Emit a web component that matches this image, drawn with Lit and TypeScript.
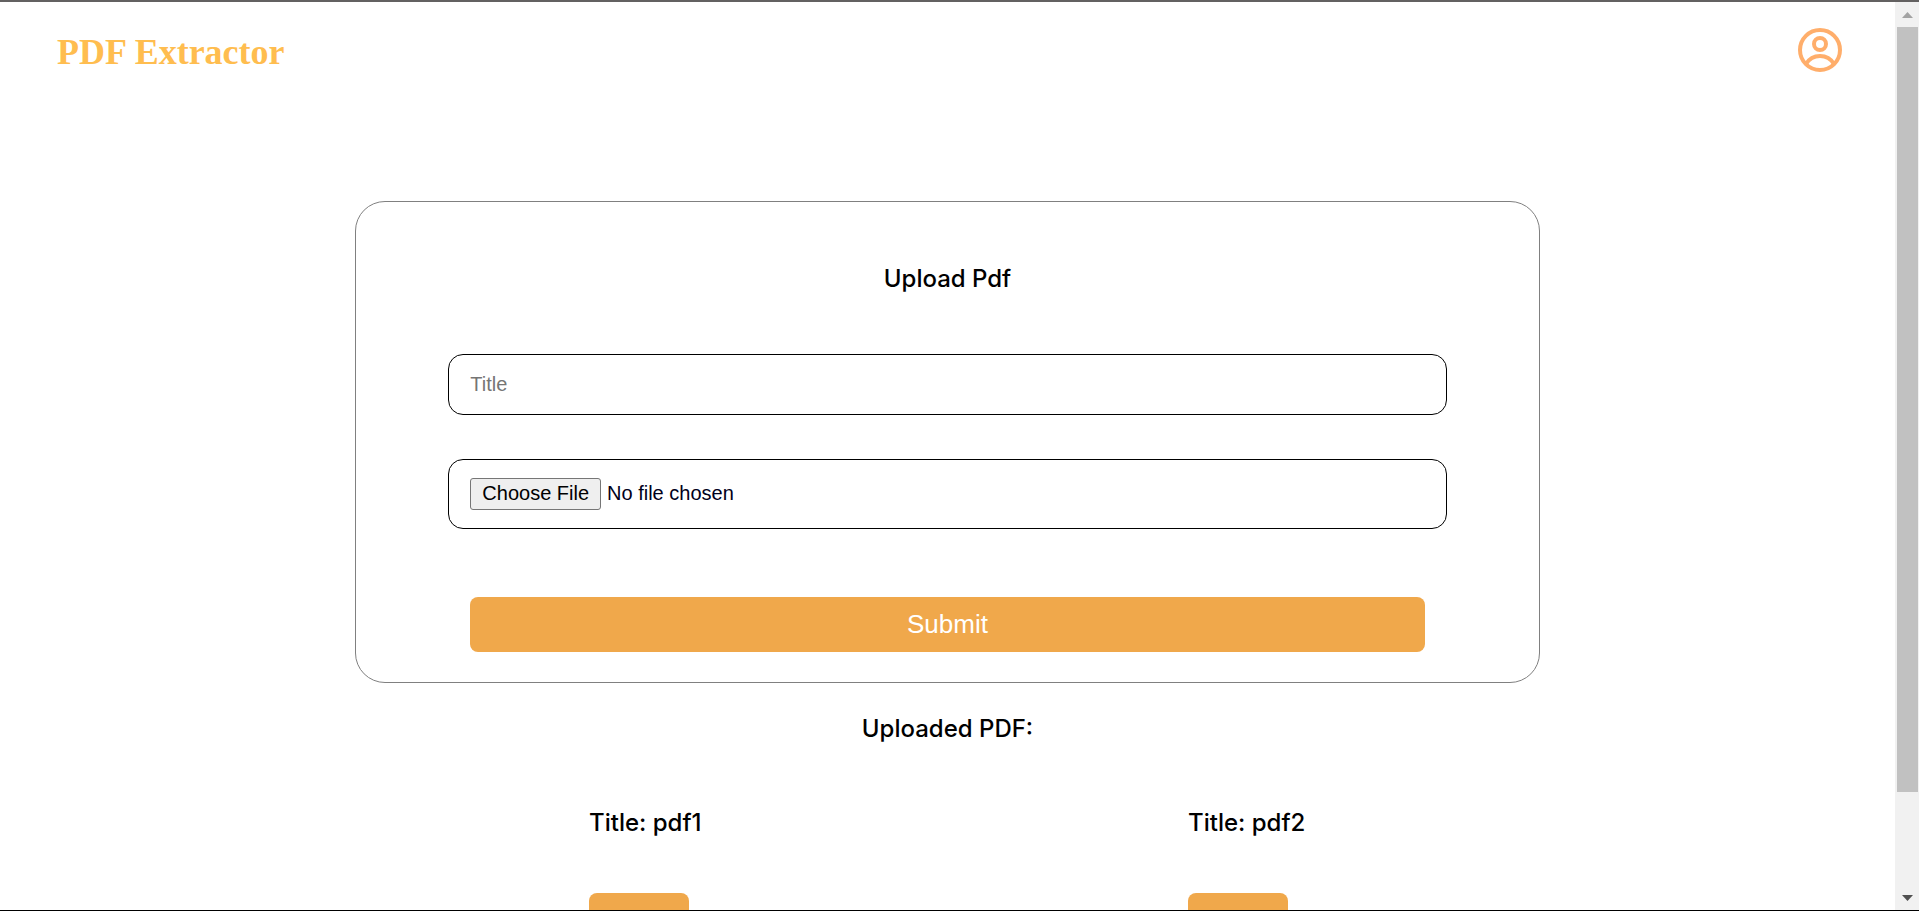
import { LitElement, html, css } from "lit";
import { customElement, state } from "lit/decorators.js";

@customElement("app-root")
export class AppRoot extends LitElement {
  static styles = css`
    :host {
      display: flex;
      box-sizing: border-box;
      height: 100vh;
      border-top: 2px solid #636161;
      border-bottom: 1px solid #000;
      background: #fff;
      color: #000;
      font-family: Inter, sans-serif;
    }
    * {
      box-sizing: border-box;
    }
    .page {
      flex: 1;
      min-width: 0;
      overflow: hidden;
    }
    .header {
      display: flex;
      justify-content: space-between;
      align-items: flex-start;
      padding: 26px 53px 0 57px;
    }
    .brand {
      margin: 0;
      font: bold 36px/48px "Liberation Serif", serif;
      color: #ffbd4f;
    }
    .account {
      display: block;
      padding: 0;
      border: 0;
      background: none;
      color: #ffae6b;
    }
    .account svg {
      display: block;
      width: 44px;
      height: 44px;
    }
    .card {
      display: flex;
      flex-direction: column;
      width: 62.5%;
      margin: 125px auto 0;
      padding: 61px 92px 30px;
      border: 1px solid #808080;
      border-radius: 30px;
    }
    .heading {
      margin: 0;
      font-size: 24px;
      line-height: 32px;
      font-weight: 500;
      text-align: center;
    }
    .field {
      width: 100%;
      border: 1px solid #000;
      border-radius: 15px;
      background: #fff;
      font: 20px/23px "Liberation Sans", sans-serif;
    }
    .title {
      margin-top: 59px;
      padding: 18px 21px;
    }
    .title::placeholder {
      color: #757575;
    }
    .file {
      margin-top: 44px;
      padding: 18px 21px;
      color: #00001a;
    }
    .file::file-selector-button {
      height: 32px;
      margin: 0 6px 0 0;
      padding: 1px 11px 3px;
      border: 1px solid #767676;
      border-radius: 3px;
      background: #efefef;
      color: #000;
      font: 20px/23px "Liberation Sans", sans-serif;
    }
    .action {
      height: 55px;
      padding: 0 0 2px;
      border: 0;
      border-radius: 8px;
      background: #f0a84b;
      color: #fff;
      font: 26px/32px "Liberation Sans", sans-serif;
    }
    .submit {
      margin: 68px 22px 0;
    }
    .uploaded {
      margin-top: 30px;
    }
    .list {
      display: grid;
      grid-template-columns: 1fr 1fr;
      max-width: 1198px;
      margin: 62px auto 0;
      padding: 0;
      list-style: none;
    }
    .item {
      justify-self: center;
      min-width: 118px;
    }
    .item .heading {
      text-align: left;
    }
    .open {
      display: block;
      width: 100px;
      margin: 54px 0 60px;
    }
    .scrollbar {
      display: flex;
      flex-direction: column;
      align-items: center;
      justify-content: space-between;
      width: 24px;
      padding: 10px 1px 9px 2px;
      background: #f1f1f1;
    }
    .track {
      flex: 1;
      width: 100%;
      margin: 9px 0 8px;
    }
    .thumb {
      height: 89%;
      background: #c1c1c1;
    }
    .arrow {
      display: block;
      width: 11px;
      height: 6px;
      fill: #a3a3a3;
    }
    .down {
      fill: #505050;
    }
  `;

  @state() private files = ["pdf1", "pdf2"];

  render() {
    return html`
      <div class="page">
        <header class="header">
          <h1 class="brand">PDF Extractor</h1>
          <button class="account" type="button" aria-label="Account">
            <svg viewBox="0 0 44 44" fill="none" stroke="currentColor" stroke-width="4">
              <circle cx="22" cy="22" r="20" />
              <circle cx="22" cy="16" r="6" />
              <path d="M8 36 C11 31 16 28 22 28 C28 28 33 31 36 36" />
            </svg>
          </button>
        </header>
        <main>
          <form class="card" @submit=${(e: Event) => e.preventDefault()}>
            <h2 class="heading">Upload Pdf</h2>
            <input class="field title" type="text" placeholder="Title" aria-label="Title" />
            <input class="field file" type="file" accept="application/pdf" aria-label="File" />
            <button class="action submit" type="submit">Submit</button>
          </form>
          <h2 class="heading uploaded">Uploaded PDF:</h2>
          <ul class="list">
            ${this.files.map(
              (name) => html`<li class="item">
                <h3 class="heading">Title: ${name}</h3>
                <button class="action open" type="button" aria-label=${name}></button>
              </li>`
            )}
          </ul>
        </main>
      </div>
      <div class="scrollbar" aria-hidden="true">
        <svg class="arrow" viewBox="0 0 11 6"><path d="M0 6 L5.5 0 L11 6Z" /></svg>
        <div class="track"><div class="thumb"></div></div>
        <svg class="arrow down" viewBox="0 0 11 6"><path d="M0 0 H11 L5.5 6Z" /></svg>
      </div>
    `;
  }
}
